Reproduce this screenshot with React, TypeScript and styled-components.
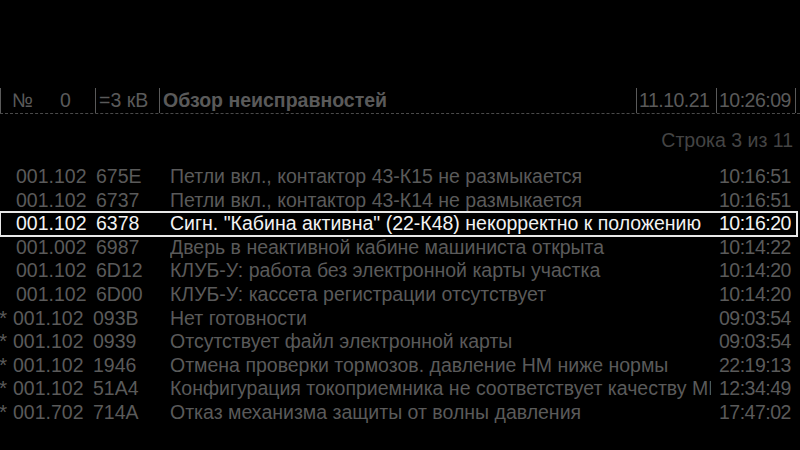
import React from "react";
import styled, { createGlobalStyle } from "styled-components";

const Global = createGlobalStyle`
  html, body { margin: 0; padding: 0; background: #000; }
  body { width: 800px; height: 450px; overflow: hidden; font-family: "Liberation Sans", Arial, sans-serif; }
`;

const Screen = styled.div`
  width: 800px;
  height: 450px;
  background: #000;
  display: flex;
  flex-direction: column;
  padding-top: 88px;
  box-sizing: border-box;
`;

const Header = styled.div`
  display: flex;
  height: 25px;
  border-bottom: 1px dashed #4a4a4a;
  color: #5a5a5a;
  font-size: 19.5px;
  line-height: 25px;
`;

const HCell = styled.div<{ $w?: number; $grow?: boolean; $bold?: boolean; $last?: boolean; $tight?: boolean }>`
  box-sizing: border-box;
  width: ${(p) => (p.$w ? `${p.$w}px` : "auto")};
  flex: ${(p) => (p.$grow ? "1" : "none")};
  border-left: 1px solid #5a5a5a;
  border-right: ${(p) => (p.$last ? "1px solid #5a5a5a" : "none")};
  padding-left: ${(p) => (p.$tight ? "2px" : "3px")};
  font-weight: ${(p) => (p.$bold ? 700 : 400)};
  letter-spacing: ${(p) => (p.$tight ? "-0.5px" : "0")};
  display: flex;
  white-space: nowrap;
  overflow: hidden;
`;

const HNum = styled.span`
  margin-left: 8px;
  width: 48px;
`;

const Counter = styled.div`
  height: 24px;
  margin-top: 14px;
  line-height: 24px;
  text-align: right;
  padding-right: 7px;
  color: #444;
  font-size: 19.5px;
`;

const List = styled.div`
  margin-top: 13px;
  display: flex;
  flex-direction: column;
`;

const Row = styled.div<{ $sel?: boolean }>`
  display: grid;
  grid-template-columns: 16px 80px 74px 541px 1fr;
  height: 23.6px;
  line-height: 23.6px;
  font-size: 19.5px;
  color: ${(p) => (p.$sel ? "#f2f2f2" : "#5a5a5a")};
  box-sizing: border-box;
  margin-right: 3px;
  outline: ${(p) => (p.$sel ? "2px solid #e8e8e8" : "none")};
  outline-offset: -1px;
  white-space: nowrap;
`;

const Marker = styled.span`
  font-size: 21px;
  line-height: 22px;
  margin-left: -1px;
`;

const Code = styled.span<{ $shift?: boolean }>`
  margin-left: ${(p) => (p.$shift ? "-3px" : "0")};
`;

const Desc = styled.span`
  overflow: hidden;
`;

const Time = styled.span`
  padding-left: 8px;
  letter-spacing: -0.5px;
`;

const rows = [
  { star: false, c1: "001.102", c2: "675E", d: "Петли вкл., контактор 43-К15 не размыкается", t: "10:16:51" },
  { star: false, c1: "001.102", c2: "6737", d: "Петли вкл., контактор 43-К14 не размыкается", t: "10:16:51" },
  { star: false, c1: "001.102", c2: "6378", d: "Сигн. \"Кабина активна\" (22-К48) некорректно к положению", t: "10:16:20", sel: true },
  { star: false, c1: "001.002", c2: "6987", d: "Дверь в неактивной кабине машиниста открыта", t: "10:14:22" },
  { star: false, c1: "001.102", c2: "6D12", d: "КЛУБ-У: работа без электронной карты участка", t: "10:14:20" },
  { star: false, c1: "001.102", c2: "6D00", d: "КЛУБ-У: кассета регистрации отсутствует", t: "10:14:20" },
  { star: true, c1: "001.102", c2: "093B", d: "Нет готовности", t: "09:03:54" },
  { star: true, c1: "001.102", c2: "0939", d: "Отсутствует файл электронной карты", t: "09:03:54" },
  { star: true, c1: "001.102", c2: "1946", d: "Отмена проверки тормозов. давление НМ ниже нормы", t: "22:19:13" },
  { star: true, c1: "001.102", c2: "51A4", d: "Конфигурация токоприемника не соответствует качеству МВПС", t: "12:34:49" },
  { star: true, c1: "001.702", c2: "714A", d: "Отказ механизма защиты от волны давления", t: "17:47:02" },
];

export default function App() {
  return (
    <Screen>
      <Global />
      <Header>
        <HCell $w={95}>
          <HNum>№</HNum>
          <span>0</span>
        </HCell>
        <HCell $w={64}>=3 кВ</HCell>
        <HCell $grow $bold>Обзор неисправностей</HCell>
        <HCell $w={80} $tight>11.10.21</HCell>
        <HCell $w={80} $last $tight>10:26:09</HCell>
        <div style={{ width: 4 }} />
      </Header>
      <Counter>Строка 3 из 11</Counter>
      <List>
        {rows.map((r, i) => (
          <Row key={i} $sel={r.sel}>
            <Marker>{r.star ? "*" : ""}</Marker>
            <Code $shift={r.star}>{r.c1}</Code>
            <Code $shift={r.star}>{r.c2}</Code>
            <Desc>{r.d}</Desc>
            <Time>{r.t}</Time>
          </Row>
        ))}
      </List>
    </Screen>
  );
}
